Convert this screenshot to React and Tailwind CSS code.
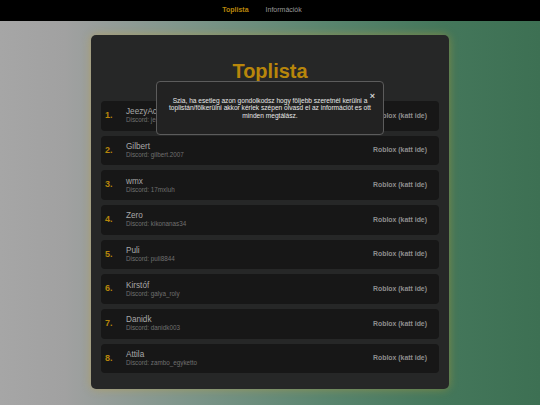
import React, { useState } from "react";

const players = [
  { name: "JeezyAce", discord: "jeezyace" },
  { name: "Gilbert", discord: "gilbert.2007" },
  { name: "wmx", discord: "17mxluh" },
  { name: "Zero", discord: "kikonanas34" },
  { name: "Puli", discord: "puli8844" },
  { name: "Kirstóf", discord: "galya_roly" },
  { name: "Danidk", discord: "danidk003" },
  { name: "Attila", discord: "zambo_egyketto" },
];

const Row = ({ rank, player }) => (
  <div className="flex items-center h-[29.5px] pl-[4px] pr-[12px] bg-[#171717] rounded-[4px]">
    <div className="w-[21px] text-[9px] font-bold text-[#b8860b]">{rank}.</div>
    <div className="flex-1 flex flex-col">
      <span className="text-[8.2px] leading-[9px] text-[#a8a8a8]">{player.name}</span>
      <span className="text-[6.3px] leading-[8px] text-[#707070]">Discord: {player.discord}</span>
    </div>
    <span className="text-[6.9px] font-bold text-[#8e8e8e] cursor-pointer">Roblox (katt ide)</span>
  </div>
);

export default function App() {
  const [showNotice, setShowNotice] = useState(true);

  return (
    <div
      className="min-h-screen bg-[linear-gradient(90deg,#a6a6a6_0%,#a1a1a1_12%,#7d958a_35%,#5a856f_60%,#44775b_82%,#3d7053_100%)]"
      style={{ fontFamily: '"Liberation Sans", Arial, sans-serif' }}
    >
      <nav className="h-[21px] bg-black flex items-center justify-center gap-[17px] pr-[16px] text-[7px]">
        <span className="font-bold text-[#b8860b]">Toplista</span>
        <span className="text-[#9a9a9a]">Információk</span>
      </nav>

      <main className="flex justify-center pt-[14px] pb-[16px]">
        <div className="w-[358px] bg-[#262727] rounded-[5px] px-[10px] pt-[25px] pb-[16px] shadow-[0_0_10px_rgba(200,160,40,0.45)]">
          <h1 className="text-center text-[20px] leading-[23px] font-bold text-[#b8860b] mb-[18px]">Toplista</h1>
          <div className="flex flex-col gap-[5.2px]">
            {players.map((p, i) => (
              <Row key={p.name} rank={i + 1} player={p} />
            ))}
          </div>
        </div>
      </main>

      {showNotice && (
        <div className="fixed top-[81px] left-1/2 -translate-x-1/2 w-[228px] bg-[#222222] border border-[#5c5c5c] rounded-[4px] px-[7px] pt-[14.5px] pb-[15px]">
          <button
            onClick={() => setShowNotice(false)}
            className="absolute right-[8px] top-[10px] text-[9px] leading-[9px] font-bold text-[#d0d0d0]"
          >
            ×
          </button>
          <p className="text-center text-[6.6px] leading-[7.5px] text-[#e8e8e8]">
            Szia, ha esetleg azon gondolkodsz hogy följebb szeretnél kerülni a toplistán/fölkerülni akkor kérlek szépen olvasd el az információt es ott minden megtálász.
          </p>
        </div>
      )}
    </div>
  );
}
